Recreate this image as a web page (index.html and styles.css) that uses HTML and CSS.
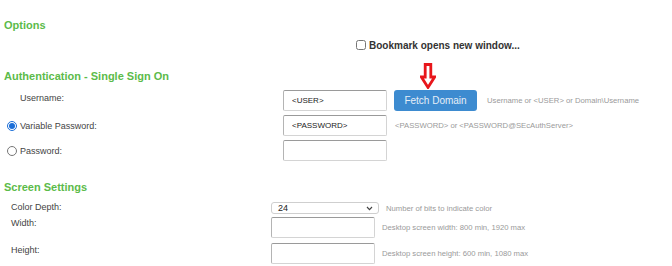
FILE: index.html
```html
<!DOCTYPE html>
<html lang="en">
<head>
  <meta charset="UTF-8">
  <title>Bookmark Settings</title>
  <link rel="stylesheet" href="styles.css">
</head>
<body>
  <div class="page">
    <!-- Options -->
    <h2 class="section-title title-options">Options</h2>
    <label class="bookmark">
      <input type="checkbox" class="check">
      <span>Bookmark opens new window...</span>
    </label>

    <!-- Authentication -->
    <h2 class="section-title title-auth">Authentication - Single Sign On</h2>
    <div class="auth-rows">
      <div class="form-row">
        <label class="row-label label-plain" for="username">Username:</label>
        <input type="text" id="username" class="text-field" value="<USER>">
        <div class="fetch-wrap">
          <svg class="fetch-arrow" width="16" height="26" viewBox="0 0 16 26">
            <path d="M5.2 1.5 H10.8 V14 H14.6 L8 24.4 L1.4 14 H5.2 Z" fill="#fff" stroke="#e8161b" stroke-width="2.8" stroke-linejoin="miter"/>
          </svg>
          <button class="btn-fetch">Fetch Domain</button>
        </div>
        <span class="hint hint-user">Username or &lt;USER&gt; or Domain\Username</span>
      </div>
      <div class="form-row">
        <label class="row-label">
          <input type="radio" name="pwd" class="radio" checked>
          <span>Variable Password:</span>
        </label>
        <input type="text" class="text-field" value="<PASSWORD>">
        <span class="hint hint-pass">&lt;PASSWORD&gt; or &lt;PASSWORD@SEcAuthServer&gt;</span>
      </div>
      <div class="form-row">
        <label class="row-label">
          <input type="radio" name="pwd" class="radio">
          <span>Password:</span>
        </label>
        <input type="password" class="text-field">
      </div>
    </div>

    <!-- Screen Settings -->
    <h2 class="section-title title-screen">Screen Settings</h2>
    <div class="screen-rows">
      <div class="screen-row row-depth">
        <label class="screen-label">Color Depth:</label>
        <div class="select-box">
          <span>24</span>
          <svg class="chevron" width="7" height="5" viewBox="0 0 7 5"><path d="M1 1 L3.5 3.6 L6 1" fill="none" stroke="#444" stroke-width="1.2"/></svg>
        </div>
        <span class="hint">Number of bits to indicate color</span>
      </div>
      <div class="screen-row row-width">
        <label class="screen-label">Width:</label>
        <input type="text" class="text-field screen-field">
        <span class="hint">Desktop screen width: 800 min, 1920 max</span>
      </div>
      <div class="screen-row row-height">
        <label class="screen-label">Height:</label>
        <input type="text" class="text-field screen-field">
        <span class="hint">Desktop screen height: 600 min, 1080 max</span>
      </div>
    </div>
  </div>
</body>
</html>
```

FILE: styles.css
```css
* {
  box-sizing: border-box;
  margin: 0;
  padding: 0;
}

body {
  font-family: 'Liberation Sans', Arial, sans-serif;
  color: #444;
  background: #fff;
}

.page {
  padding-top: 18px;
}

/* Section headings */
.section-title {
  font-size: 11px;
  line-height: 14px;
  font-weight: bold;
  color: #5cbb4a;
  padding-left: 4px;
}

.title-auth {
  margin-top: 17px;
}

.title-screen {
  margin-top: 19px;
}

/* Options */
.bookmark {
  display: flex;
  align-items: center;
  gap: 3px;
  padding-left: 356px;
  margin-top: 6px;
  height: 14px;
  font-size: 10px;
  font-weight: bold;
  color: #333;
}

.check {
  width: 10px;
  height: 10px;
  margin: 0;
}

/* Authentication rows */
.auth-rows {
  display: flex;
  flex-direction: column;
  gap: 4px;
  margin-top: 7px;
}

.form-row {
  display: flex;
  align-items: center;
  height: 21px;
}

.row-label {
  width: 283px;
  display: flex;
  align-items: center;
  gap: 3px;
  padding-left: 7px;
  font-size: 9px;
}

.label-plain {
  padding-left: 20px;
  margin-top: -6px;
}

.radio {
  width: 10px;
  height: 10px;
  margin: 0;
  accent-color: #1a6ed8;
}

.text-field {
  width: 104px;
  height: 21px;
  border: 1px solid #d4d4d4;
  border-top-color: #9a9a9a;
  border-left-color: #b4b4b4;
  border-radius: 2px;
  padding: 0 8px;
  font-family: 'Liberation Sans', Arial, sans-serif;
  font-size: 8px;
  color: #222;
  background: #fff;
}

.fetch-wrap {
  position: relative;
  margin-left: 7px;
  margin-top: -1px;
}

.fetch-arrow {
  position: absolute;
  left: 26px;
  bottom: calc(100% + 1px);
}

.btn-fetch {
  display: block;
  width: 83px;
  height: 21px;
  border: none;
  border-radius: 3px;
  background: #3d8bd0;
  color: #e6eef7;
  font-family: 'Liberation Sans', Arial, sans-serif;
  font-size: 10px;
}

.hint {
  font-size: 7.7px;
  color: #9a9a9a;
  margin-left: 7px;
}

.hint-user {
  margin-left: 10px;
}

.hint-pass {
  margin-left: 8px;
}

/* Screen settings */
.screen-rows {
  display: flex;
  flex-direction: column;
  margin-top: 8px;
}

.screen-row {
  display: flex;
  align-items: center;
}

.row-width {
  margin-top: 3px;
}

.row-height {
  margin-top: 5px;
}

.screen-label {
  width: 271px;
  padding-left: 11px;
  font-size: 9px;
  align-self: flex-start;
}

.row-width .screen-label {
  margin-top: 1px;
}

.row-height .screen-label {
  margin-top: 2px;
}

.select-box {
  width: 108px;
  height: 12px;
  border: 1px solid #cfcfcf;
  border-radius: 3px;
  display: flex;
  align-items: center;
  justify-content: space-between;
  padding: 0 5px 0 6px;
  font-size: 9px;
  color: #222;
}

.screen-field {
  width: 104px;
}
```
